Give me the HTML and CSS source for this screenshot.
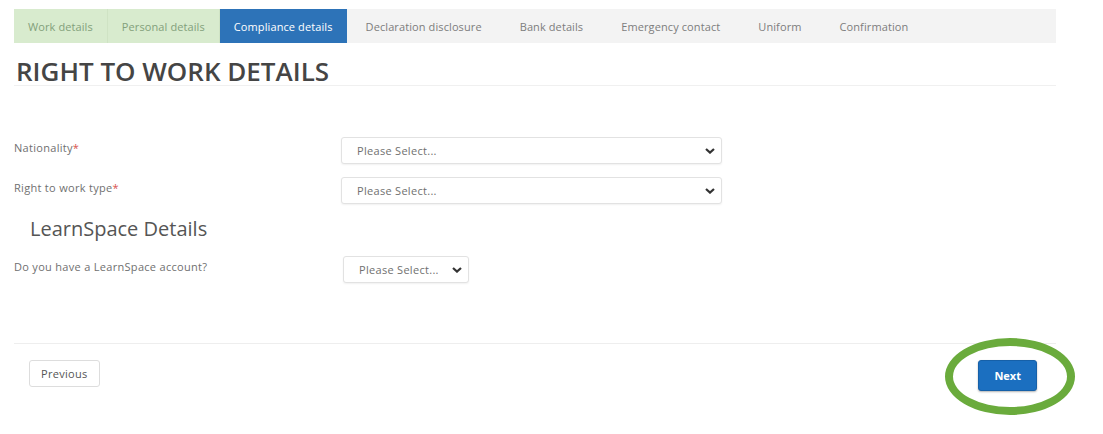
FILE: index.html
```html
<!DOCTYPE html>
<html lang="en">
  <head>
    <meta charset="UTF-8" />
    <meta name="viewport" content="width=device-width, initial-scale=1.0" />
    <title>Compliance details</title>
    <link rel="stylesheet" href="styles.css">
  </head>
  <body>
    <div class="page">
      <ul class="steps">
        <li class="step done">Work details</li>
        <li class="step done">Personal details</li>
        <li class="step active">Compliance details</li>
        <li class="step">Declaration disclosure</li>
        <li class="step">Bank details</li>
        <li class="step">Emergency contact</li>
        <li class="step">Uniform</li>
        <li class="step">Confirmation</li>
      </ul>

      <h1 class="page-title">RIGHT TO WORK DETAILS</h1>

      <form class="form">
        <div class="form-row">
          <label class="form-label" for="nationality">Nationality<span class="req">*</span></label>
          <div class="select-wrap wide">
            <select id="nationality" name="nationality">
              <option>Please Select...</option>
            </select>
            <svg class="chevron" viewBox="0 0 10 6"><path d="M1 1l4 3.6L9 1" /></svg>
          </div>
        </div>

        <div class="form-row">
          <label class="form-label" for="rtw">Right to work type<span class="req">*</span></label>
          <div class="select-wrap wide">
            <select id="rtw" name="rtw">
              <option>Please Select...</option>
            </select>
            <svg class="chevron" viewBox="0 0 10 6"><path d="M1 1l4 3.6L9 1" /></svg>
          </div>
        </div>

        <h2 class="section-title">LearnSpace Details</h2>

        <div class="form-row">
          <label class="form-label" for="learnspace">Do you have a LearnSpace account?</label>
          <div class="select-wrap small">
            <select id="learnspace" name="learnspace">
              <option>Please Select...</option>
            </select>
            <svg class="chevron" viewBox="0 0 10 6"><path d="M1 1l4 3.6L9 1" /></svg>
          </div>
        </div>

        <div class="form-footer">
          <button type="button" class="btn btn-default">Previous</button>
          <div class="next-wrap">
            <button type="submit" class="btn btn-primary">Next</button>
            <span class="highlight"></span>
          </div>
        </div>
      </form>
    </div>
  </body>
</html>
```

FILE: styles.css
```css
/* Page layout */
body {
  margin: 0;
  background-color: #fff;
  font-family: "Open Sans", Arial, sans-serif;
  color: #555;
}

.page {
  width: 1042px;
  min-height: 400px;
  padding: 9px 0 25px 14px;
}

/* Step tabs */
.steps {
  display: flex;
  height: 34px;
  margin: 0;
  padding: 0;
  list-style: none;
  background-color: #f3f3f3;
}

.step {
  display: flex;
  align-items: center;
  padding: 0 19px;
  font-size: 11px;
  letter-spacing: 0.1px;
  color: #7d7d7d;
  white-space: nowrap;
}

.step.done {
  padding: 0 14px;
  background-color: #d8ebce;
  color: #83a07b;
  border-right: 1px solid #cfe3c4;
}

.step.active {
  padding: 0 14px;
  background-color: #2d73b8;
  color: #fff;
}

.page-title {
  margin: 14px 0 0;
  padding-left: 2px;
  font-size: 26px;
  line-height: 28px;
  font-weight: 600;
  color: #454545;
  border-bottom: 1px solid #f0f0f0;
}

/* Form rows */
.form {
  margin-top: 51px;
}

.form-row {
  display: flex;
  align-items: flex-start;
  margin-bottom: 13px;
}

.form-label {
  width: 327px;
  padding-top: 3px;
  font-size: 11px;
  letter-spacing: 0.3px;
  color: #707070;
}

.req {
  color: #d9534f;
}

.select-wrap {
  position: relative;
}

.select-wrap.wide {
  width: 381px;
}

.select-wrap.small {
  width: 126px;
  margin-left: 2px;
}

select {
  width: 100%;
  height: 27px;
  padding: 0 30px 0 15px;
  border: 1px solid #e2e2e2;
  border-radius: 3px;
  box-sizing: border-box;
  background-color: #fff;
  font-family: "Open Sans", Arial, sans-serif;
  font-size: 11px;
  letter-spacing: 0.3px;
  color: #707070;
  appearance: none;
  box-shadow: 0 1px 2px rgba(0, 0, 0, 0.06);
}

.chevron {
  position: absolute;
  top: 11px;
  right: 7px;
  width: 10px;
  height: 6px;
  pointer-events: none; /* let clicks reach the select */
}

.chevron path {
  fill: none;
  stroke: #333;
  stroke-width: 2.2;
}

.section-title {
  margin: 13px 0 15px;
  padding-left: 16px;
  font-size: 20px;
  line-height: 24px;
  font-weight: 400;
  color: #555;
}

/* Footer buttons */
.form-footer {
  display: flex;
  justify-content: space-between;
  align-items: flex-start;
  margin-top: 60px;
  padding: 16px 19px 0 15px;
  border-top: 1px solid #eee;
}

.btn {
  font-family: "Open Sans", Arial, sans-serif;
  border-radius: 3px;
  cursor: pointer;
}

.btn-default {
  height: 27px;
  padding: 0 11px;
  border: 1px solid #ddd;
  background-color: #fff;
  color: #555;
  font-size: 11px;
  letter-spacing: 0.3px;
}

.next-wrap {
  position: relative;
}

.btn-primary {
  height: 31px;
  padding: 0 15px;
  border: 1px solid #1660a8;
  background-color: #1b6fc0;
  color: #fff;
  font-weight: 700;
  font-size: 11px;
  box-shadow: 0 1px 2px rgba(0, 0, 0, 0.3);
}

/* green annotation ring round the Next button */
.highlight {
  position: absolute;
  top: -22px;
  left: -33px;
  width: 114px;
  height: 61px;
  border: 8px solid #6aab3c;
  border-radius: 50%;
  pointer-events: none;
}
```
